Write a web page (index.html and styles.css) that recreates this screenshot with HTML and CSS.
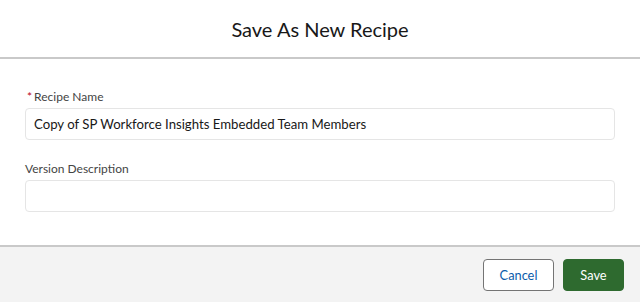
FILE: index.html
```html
<!DOCTYPE html>
<html lang="en">
<head>
<meta charset="utf-8">
<title>Save As New Recipe</title>
<link rel="stylesheet" href="styles.css">
</head>
<body>
<div class="modal">
  <header class="modal-header">
    <h1 class="modal-title">Save As New Recipe</h1>
  </header>
  <div class="modal-body">
    <div class="field">
      <label class="field-label"><abbr class="required" title="required">*</abbr>Recipe Name</label>
      <div class="input">Copy of SP Workforce Insights Embedded Team Members</div>
    </div>
    <div class="field">
      <label class="field-label">Version Description</label>
      <div class="input"></div>
    </div>
  </div>
  <footer class="modal-footer">
    <button class="btn btn-neutral">Cancel</button>
    <button class="btn btn-brand">Save</button>
  </footer>
</div>
</body>
</html>
```
FILE: styles.css
```css
html, body {
  margin: 0;
  padding: 0;
  background: #ffffff;
}
body {
  font-family: Lato, "Open Sans", "Liberation Sans", sans-serif;
  color: #181818;
  width: 640px;
  height: 302px;
  overflow: hidden;
}
.modal {
  display: flex;
  flex-direction: column;
  height: 302px;
}
.modal-header {
  height: 57px;
  border-bottom: 2px solid #c9c9c9;
  display: flex;
  align-items: center;
  justify-content: center;
}
.modal-title {
  margin: 0;
  font-size: 20px;
  font-weight: 400;
  line-height: 24px;
  color: #181818;
}
.modal-body {
  flex: 1;
  padding: 29px 25px 0 25px;
  display: flex;
  flex-direction: column;
  gap: 20px;
}
.field {
  display: flex;
  flex-direction: column;
  gap: 2px;
}
.field-label {
  font-size: 12px;
  line-height: 18px;
  color: #444444;
}
.required {
  color: #ba0517;
  text-decoration: none;
  border: 0;
  margin: 0 2px 0 2px;
}
.input {
  height: 32px;
  box-sizing: border-box;
  border: 1px solid #e5e5e5;
  border-radius: 4px;
  background: #fff;
  padding: 0 8px;
  font-size: 13.2px;
  line-height: 30px;
  color: #181818;
  white-space: nowrap;
}
.modal-footer {
  border-top: 2px solid #c9c9c9;
  background: #f3f3f3;
  display: flex;
  justify-content: flex-end;
  align-items: flex-start;
  padding: 12px 16px 0 0;
  gap: 9px;
  box-sizing: content-box;
  height: 43px;
}
.btn {
  height: 32px;
  box-sizing: border-box;
  border-radius: 4px;
  font-family: inherit;
  font-size: 12.8px;
  line-height: 30px;
  padding: 0;
}
.btn-neutral {
  width: 71px;
  background: #ffffff;
  border: 1px solid #747474;
  color: #0b5cab;
}
.btn-brand {
  width: 61px;
  background: #2e6a2f;
  border: 1px solid #2e6a2f;
  color: #ffffff;
}
```
